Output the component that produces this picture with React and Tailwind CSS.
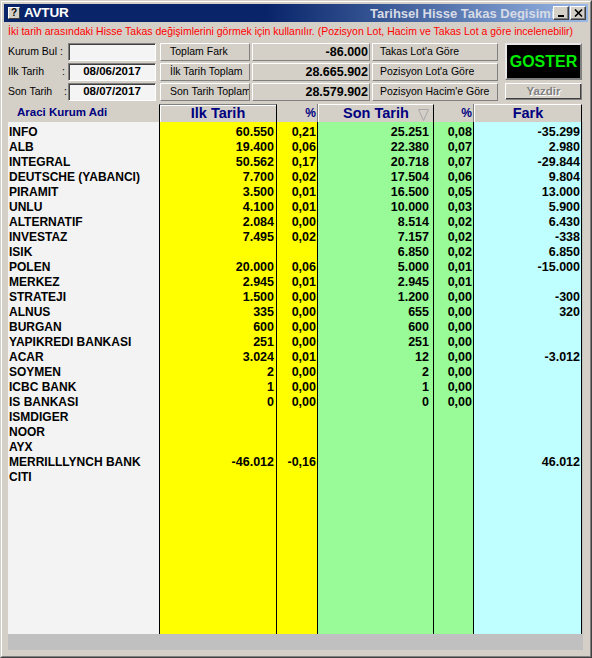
import React from "react";

const rows = [
  ["INFO", "60.550", "0,21", "25.251", "0,08", "-35.299"],
  ["ALB", "19.400", "0,06", "22.380", "0,07", "2.980"],
  ["INTEGRAL", "50.562", "0,17", "20.718", "0,07", "-29.844"],
  ["DEUTSCHE (YABANCI)", "7.700", "0,02", "17.504", "0,06", "9.804"],
  ["PIRAMIT", "3.500", "0,01", "16.500", "0,05", "13.000"],
  ["UNLU", "4.100", "0,01", "10.000", "0,03", "5.900"],
  ["ALTERNATIF", "2.084", "0,00", "8.514", "0,02", "6.430"],
  ["INVESTAZ", "7.495", "0,02", "7.157", "0,02", "-338"],
  ["ISIK", "", "", "6.850", "0,02", "6.850"],
  ["POLEN", "20.000", "0,06", "5.000", "0,01", "-15.000"],
  ["MERKEZ", "2.945", "0,01", "2.945", "0,01", ""],
  ["STRATEJI", "1.500", "0,00", "1.200", "0,00", "-300"],
  ["ALNUS", "335", "0,00", "655", "0,00", "320"],
  ["BURGAN", "600", "0,00", "600", "0,00", ""],
  ["YAPIKREDI BANKASI", "251", "0,00", "251", "0,00", ""],
  ["ACAR", "3.024", "0,01", "12", "0,00", "-3.012"],
  ["SOYMEN", "2", "0,00", "2", "0,00", ""],
  ["ICBC BANK", "1", "0,00", "1", "0,00", ""],
  ["IS BANKASI", "0", "0,00", "0", "0,00", ""],
  ["ISMDIGER", "", "", "", "", ""],
  ["NOOR", "", "", "", "", ""],
  ["AYX", "", "", "", "", ""],
  ["MERRILLLYNCH BANK", "-46.012", "-0,16", "", "", "46.012"],
  ["CITI", "", "", "", "", ""],
];

const raised =
  "border border-t-white border-l-white border-r-[#808080] border-b-[#808080] bg-[#d4d0c8]";
const sunken =
  "border border-t-[#808080] border-l-[#808080] border-r-white border-b-white shadow-[inset_1px_1px_#404040]";

function Col({ idx, className, cellClass }) {
  return (
    <div className={"h-full flex flex-col pt-[3px] " + className}>
      {rows.map((r, i) => (
        <div key={i} className={"h-[15px] leading-[15px] whitespace-nowrap " + cellClass}>
          {r[idx]}
        </div>
      ))}
    </div>
  );
}

export default function App() {
  const num = "text-right font-bold text-[12.5px] text-black";
  return (
    <div className="w-[592px] h-[658px] bg-[#d4d0c8] font-['Liberation_Sans',Arial,sans-serif] border border-t-[#d4d0c8] border-l-[#d4d0c8] border-r-[#404040] border-b-[#404040]">
      <div className="h-full border border-t-white border-l-white border-r-[#808080] border-b-[#808080] p-[2px] flex flex-col">
        {/* Title bar */}
        <div className="h-[18px] flex items-center bg-linear-to-r from-[#0a246a] from-45% to-[#9ab8e6]">
          <div className="ml-[4px] w-[12px] h-[12px] bg-[#d4d0c8] border border-t-white border-l-white border-r-[#404040] border-b-[#404040] flex items-center justify-center text-[10px] font-bold leading-none text-black">
            ?
          </div>
          <div className="ml-[4px] text-white font-bold text-[13.5px] leading-none tracking-[-0.2px]">AVTUR</div>
          <div className="flex-1" />
          <div className="w-[183px] overflow-hidden whitespace-nowrap text-[#d8dce6] font-bold text-[13px] leading-none">
            Tarihsel Hisse Takas Degisimi
          </div>
          <div className="flex mr-[2px]">
            <div className="w-[16px] h-[14px] bg-[#d4d0c8] border border-t-white border-l-white border-r-[#404040] border-b-[#404040] shadow-[inset_-1px_-1px_#808080] flex items-end justify-center pb-[2px]">
              <div className="w-[6px] h-[2px] bg-black" />
            </div>
            <div className="ml-[1px] w-[16px] h-[14px] bg-[#d4d0c8] border border-t-white border-l-white border-r-[#404040] border-b-[#404040] shadow-[inset_-1px_-1px_#808080] flex items-center justify-center">
              <svg width="9" height="8" viewBox="0 0 9 8">
                <path d="M1 0.5 L8 7.5 M8 0.5 L1 7.5" stroke="black" strokeWidth="1.6" />
              </svg>
            </div>
          </div>
        </div>

        {/* Info line */}
        <div className="mt-[2px] pl-[4px] h-[14px] leading-[14px] text-[10.5px] text-[#ff0000] whitespace-nowrap overflow-hidden">
          İki tarih arasındaki Hisse Takas değişimlerini görmek için kullanılır. (Pozisyon Lot, Hacim ve Takas Lot a göre incelenebilir)
        </div>

        {/* Form */}
        <div className="mt-[5px] pl-[4px] flex text-[10.5px] text-black">
          <div className="flex flex-col gap-[2px]">
            {[
              ["Kurum Bul", "", 0],
              ["Ilk Tarih", "08/06/2017", 1],
              ["Son Tarih", "08/07/2017", 2],
            ].map(([lab, val, i]) => (
              <div key={i} className="flex h-[18px] items-center">
                <div className="w-[60px] flex items-center whitespace-nowrap">
                  {i === 0 ? (
                    <span>Kurum Bul :</span>
                  ) : (
                    <>
                      <span>{lab}</span>
                      <span className={i === 1 ? "ml-auto mr-[3px]" : "ml-auto mr-[1px]"}>:</span>
                    </>
                  )}
                </div>
                <div className={"w-[88px] h-[18px] bg-[#f4f4f4] flex items-center justify-center font-bold text-[11.5px] " + sunken}>
                  {val}
                </div>
                <div className={"ml-[4px] w-[90px] h-[18px] flex items-center pl-[9px] whitespace-nowrap overflow-hidden " + raised}>
                  {["Toplam Fark", "İlk Tarih Toplam", "Son Tarih Toplam"][i]}
                </div>
                <div className={"ml-[2px] w-[118px] h-[18px] flex items-center justify-end pr-[1px] font-bold text-[12.5px] " + raised}>
                  {["-86.000", "28.665.902", "28.579.902"][i]}
                </div>
                <div className={"ml-[2px] w-[126px] h-[18px] flex items-center pl-[7px] whitespace-nowrap " + raised}>
                  {["Takas Lot'a Göre", "Pozisyon Lot'a Göre", "Pozisyon Hacim'e Göre"][i]}
                </div>
              </div>
            ))}
          </div>
          <div className="ml-[7px] flex flex-col">
            <div className="w-[77px] h-[37px] bg-black border-2 border-t-[#e8e8e8] border-l-[#e8e8e8] border-r-[#808080] border-b-[#808080] flex items-center justify-center text-[#00ee00] font-bold text-[16px]">
              GOSTER
            </div>
            <div className={"mt-[3px] w-[77px] h-[17px] flex items-center justify-center font-bold text-[11.5px] text-[#808080] [text-shadow:1px_1px_#ffffff] shadow-[inset_-1px_-1px_#404040] " + raised}>
              Yazdir
            </div>
          </div>
        </div>

        {/* Grid */}
        <div className="mt-[3px] ml-[4px] w-[575px] h-[546px] flex flex-col bg-[#c0c0c0]">
          {/* Header */}
          <div className="h-[18px] flex bg-[#d4d0c8] text-[#000080] font-bold">
            <div className="w-[151px] h-full flex items-center pl-[9px] text-[11.5px]">Araci Kurum Adi</div>
            <div className="w-[118px] h-full border-x border-black border-t border-t-[#808080] shadow-[inset_1px_1px_white] flex items-center justify-center text-[14.5px]">
              Ilk Tarih
            </div>
            <div className="w-[41px] h-full border-r border-[#808080] flex items-center justify-end pr-[1px] text-[12px]">%</div>
            <div className="relative w-[116px] h-full border-r border-black border-t border-t-white border-l border-l-white flex items-center justify-center text-[14.5px]">
              Son Tarih
              <svg className="absolute right-[4px] top-[4px]" width="11" height="12" viewBox="0 0 11 12">
                <path d="M0.5 0.5 H10.5 L5.5 11.5 Z" fill="none" stroke="#a8a8a8" strokeWidth="1" />
              </svg>
            </div>
            <div className="w-[40px] h-full border-r border-[#808080] flex items-center justify-end pr-[1px] text-[12px]">%</div>
            <div className="w-[108px] h-full border-r border-black border-t border-t-white border-l border-l-white flex items-center justify-center text-[14.5px]">
              Fark
            </div>
          </div>
          {/* Body */}
          <div className="h-[512px] flex">
            <Col idx={0} className="w-[151px] bg-[#f3f3f3] pl-[1px]" cellClass="font-bold text-[12px] text-black" />
            <Col idx={1} className="w-[118px] bg-[#ffff00] border-x border-black pr-[2px]" cellClass={num} />
            <Col idx={2} className="w-[41px] bg-[#ffff00] border-r border-black pr-[1px]" cellClass={num} />
            <Col idx={3} className="w-[116px] bg-[#98fb98] border-r border-black pr-[4px]" cellClass={num} />
            <Col idx={4} className="w-[40px] bg-[#98fb98] border-r border-black pr-[1px]" cellClass={num} />
            <Col idx={5} className="w-[108px] bg-[#c0ffff] border-r border-black pr-[1px]" cellClass={num} />
          </div>
        </div>
      </div>
    </div>
  );
}
